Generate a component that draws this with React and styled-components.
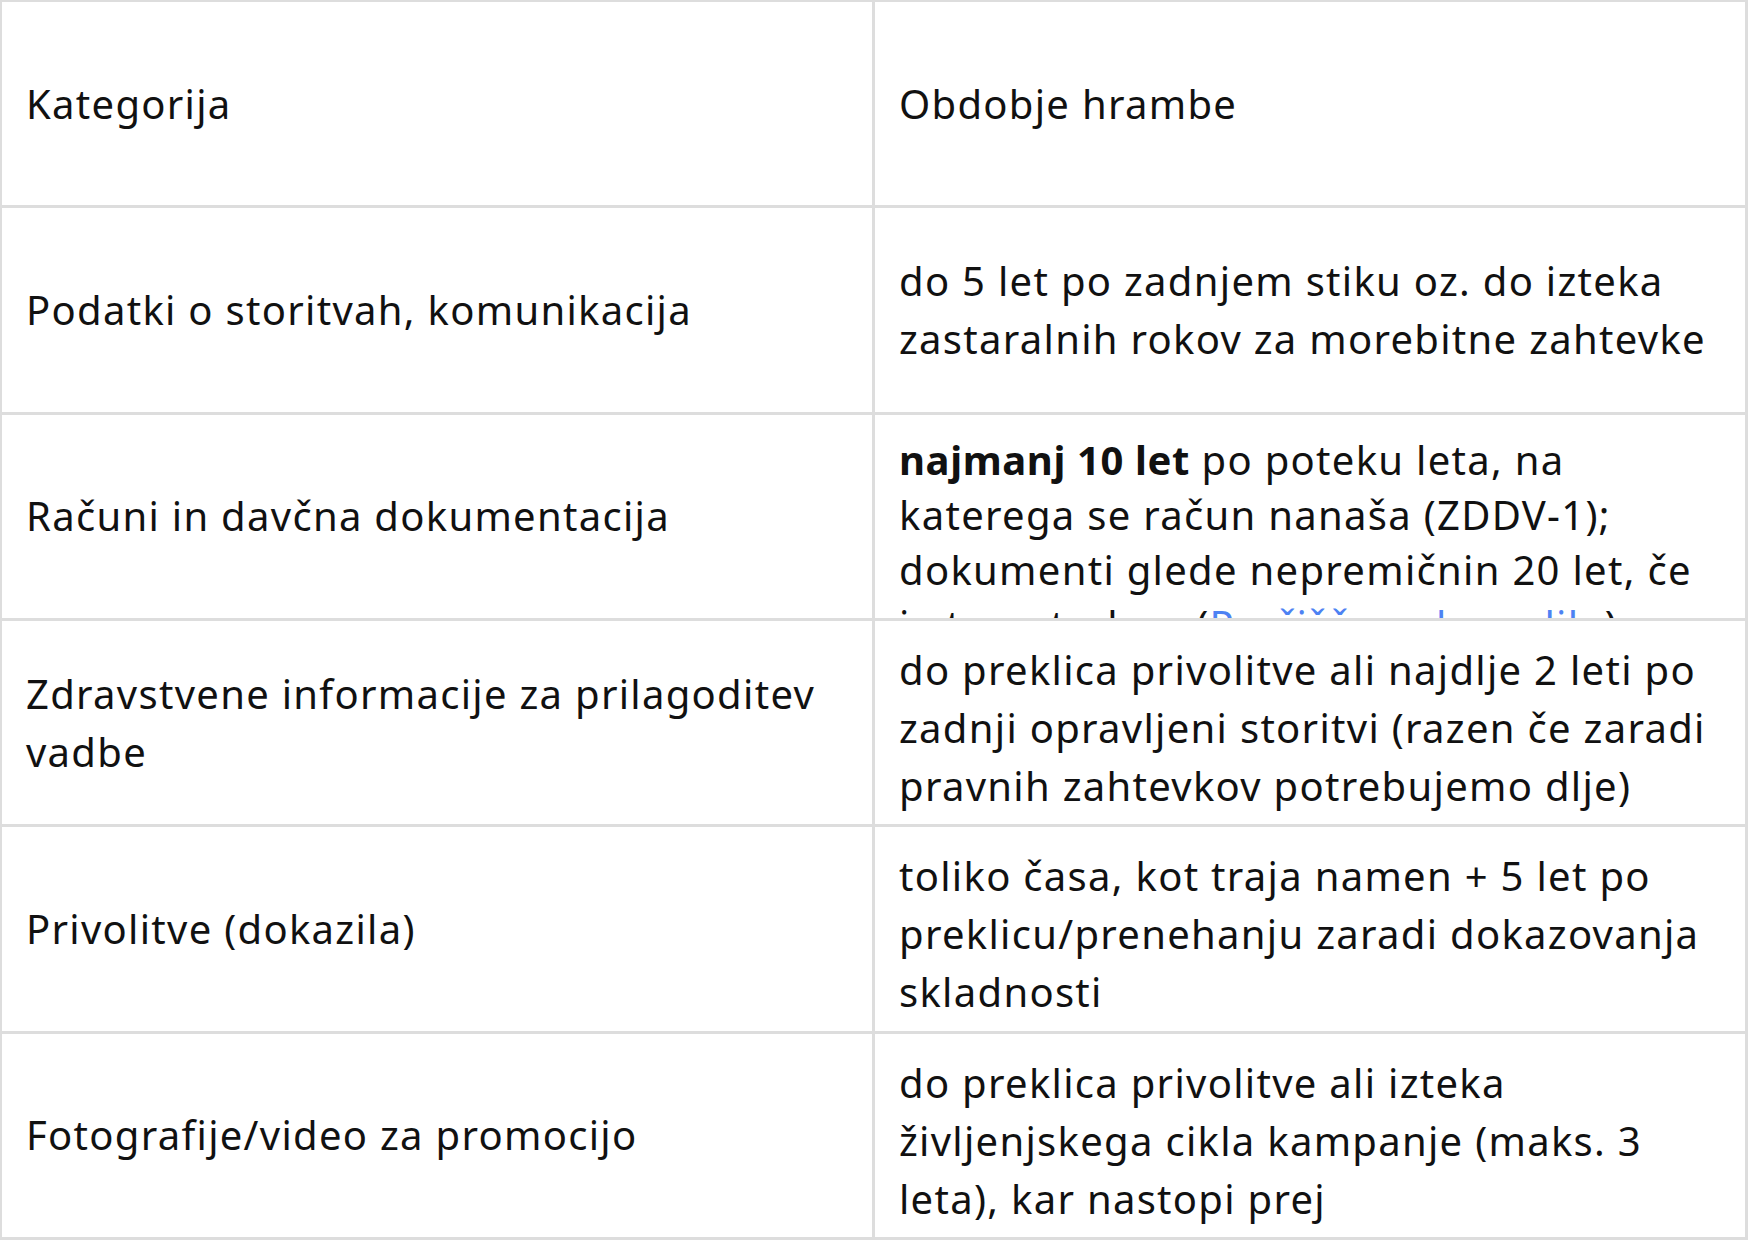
import React from "react";
import styled, { createGlobalStyle } from "styled-components";

const GlobalStyle = createGlobalStyle`
  html, body {
    margin: 0;
    padding: 0;
    background: #ffffff;
  }
  body {
    font-family: "Noto Sans", "Open Sans", sans-serif;
    color: #111111;
  }
`;

const Table = styled.div`
  width: 1748px;
  height: 1240px;
  box-sizing: border-box;
  display: grid;
  grid-template-columns: 1fr 1fr;
  grid-auto-rows: 1fr;
  gap: 3px;
  padding: 2px 3px 3px 2px;
  background: #dddddd;
`;

const Cell = styled.div`
  background: #ffffff;
  box-sizing: border-box;
  padding: ${(props) => (props.tight ? "17px 24px 20px" : "20px 24px")};
  display: flex;
  flex-direction: column;
  justify-content: safe center;
  overflow: hidden;
  min-height: 0;
  font-size: 40px;
  line-height: ${(props) => (props.tight ? "55px" : "58px")};
  letter-spacing: 1.3px;
  white-space: nowrap;
`;

const Strong = styled.b`
  font-weight: 700;
  letter-spacing: 0.6px;
`;

const LinkText = styled.span`
  color: #4d82f3;
`;

const rows = [
  { label: ["Kategorija"], value: ["Obdobje hrambe"] },
  {
    label: ["Podatki o storitvah, komunikacija"],
    value: [
      "do 5 let po zadnjem stiku oz. do izteka",
      "zastaralnih rokov za morebitne zahtevke",
    ],
  },
  {
    label: ["Računi in davčna dokumentacija"],
    value: null,
  },
  {
    label: ["Zdravstvene informacije za prilagoditev", "vadbe"],
    value: [
      "do preklica privolitve ali najdlje 2 leti po",
      "zadnji opravljeni storitvi (razen če zaradi",
      "pravnih zahtevkov potrebujemo dlje)",
    ],
  },
  {
    label: ["Privolitve (dokazila)"],
    value: [
      "toliko časa, kot traja namen + 5 let po",
      "preklicu/prenehanju zaradi dokazovanja",
      "skladnosti",
    ],
  },
  {
    label: ["Fotografije/video za promocijo"],
    value: [
      "do preklica privolitve ali izteka",
      "življenjskega cikla kampanje (maks. 3",
      "leta), kar nastopi prej",
    ],
  },
];

function Lines({ lines }) {
  return (
    <div>
      {lines.map((line, i) => (
        <div key={i}>{line}</div>
      ))}
    </div>
  );
}

function TaxValue() {
  return (
    <div>
      <div>
        <Strong>najmanj 10 let</Strong> po poteku leta, na
      </div>
      <div>katerega se račun nanaša (ZDDV-1);</div>
      <div>dokumenti glede nepremičnin 20 let, če</div>
      <div>
        je to potrebno (<LinkText>Prečiščeno besedilo</LinkText>)
      </div>
    </div>
  );
}

export default function App() {
  return (
    <>
      <GlobalStyle />
      <Table>
        {rows.map((row, i) => (
          <React.Fragment key={i}>
            <Cell>
              <Lines lines={row.label} />
            </Cell>
            <Cell tight={!row.value}>
              {row.value ? <Lines lines={row.value} /> : <TaxValue />}
            </Cell>
          </React.Fragment>
        ))}
      </Table>
    </>
  );
}
